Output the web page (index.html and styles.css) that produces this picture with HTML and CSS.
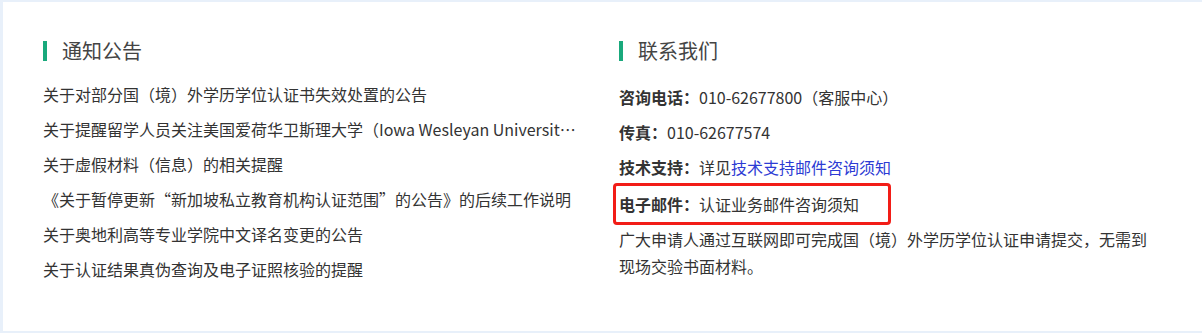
FILE: index.html
```
<!DOCTYPE html>
<html lang="zh-CN">
<head>
    <meta charset="UTF-8">
    <meta name="viewport" content="width=device-width, initial-scale=1.0">
    <title>通知公告 - 联系我们</title>
    <link rel="stylesheet" href="styles.css">
</head>
<body>
    <div class="info-panel">
        <div class="info-col">
            <h2 class="col-title">通知公告</h2>
            <ul class="notice-list">
                <li class="notice-item">关于对部分国（境）外学历学位认证书失效处置的公告</li>
                <li class="notice-item">关于提醒留学人员关注美国爱荷华卫斯理大学（Iowa Wesleyan University）关闭信息的公告</li>
                <li class="notice-item">关于虚假材料（信息）的相关提醒</li>
                <li class="notice-item">《关于暂停更新“新加坡私立教育机构认证范围”的公告》的后续工作说明</li>
                <li class="notice-item">关于奥地利高等专业学院中文译名变更的公告</li>
                <li class="notice-item">关于认证结果真伪查询及电子证照核验的提醒</li>
            </ul>
        </div>

        <div class="info-col">
            <h2 class="col-title">联系我们</h2>
            <div class="contact">
                <div class="contact-row"><b>咨询电话：</b>010-62677800（客服中心）</div>
                <div class="contact-row"><b>传真：</b>010-62677574</div>
                <div class="contact-row"><b>技术支持：</b>详见<a class="contact-link" href="#">技术支持邮件咨询须知</a></div>
                <div class="contact-row mail-box"><b>电子邮件：</b>认证业务邮件咨询须知</div>
                <p class="contact-note">广大申请人通过互联网即可完成国（境）外学历学位认证申请提交，无需到现场交验书面材料。</p>
            </div>
        </div>
    </div>
</body>
</html>
```

FILE: styles.css
```
:root {
    --page-blue: #e8f0fa;
    --title-green: #19a97c;
    --text-main: #333;
    --text-title: #444;
    --link-blue: #2d3bd4;
    --mark-red: #f21d17;
}

body {
    margin: 0;
    background: var(--page-blue);
    font-family: "Microsoft YaHei", "Noto Sans CJK SC", sans-serif;
    color: var(--text-main);
}

.info-panel {
    display: flex;
    gap: 36px;
    margin: 2px 0 2px 3px;
    height: 329px;
    box-sizing: border-box;
    padding: 39px 0 0 40px;
    background: #fff;
}

.info-col {
    width: 540px;
    flex-shrink: 0;
}

/* 栏目标题 */
.col-title {
    margin: 0;
    padding-left: 15px;
    border-left: 4px solid var(--title-green);
    font-size: 20px;
    font-weight: normal;
    line-height: 20px;
    color: var(--text-title);
}

.notice-list {
    list-style: none;
    margin: 16px 0 0;
    padding: 0;
}

.notice-item {
    font-size: 16px;
    line-height: 35px;
    white-space: nowrap;
    overflow: hidden;
    text-overflow: ellipsis;
}

.contact {
    margin-top: 19px;
    font-size: 16px;
}

.contact-row {
    line-height: 35px;
}

.contact-row b {
    font-weight: bold;
}

.contact-link {
    color: var(--link-blue);
    text-decoration: none;
}

/* 红框标注 */
.mail-box {
    display: inline-block;
    margin: -2px 0 0 -6px;
    padding: 0 29px 0 3px;
    line-height: 36px;
    border: 3px solid var(--mark-red);
    border-radius: 4px;
}

.contact-note {
    margin: 1px 0 0;
    line-height: 27px;
}
```
